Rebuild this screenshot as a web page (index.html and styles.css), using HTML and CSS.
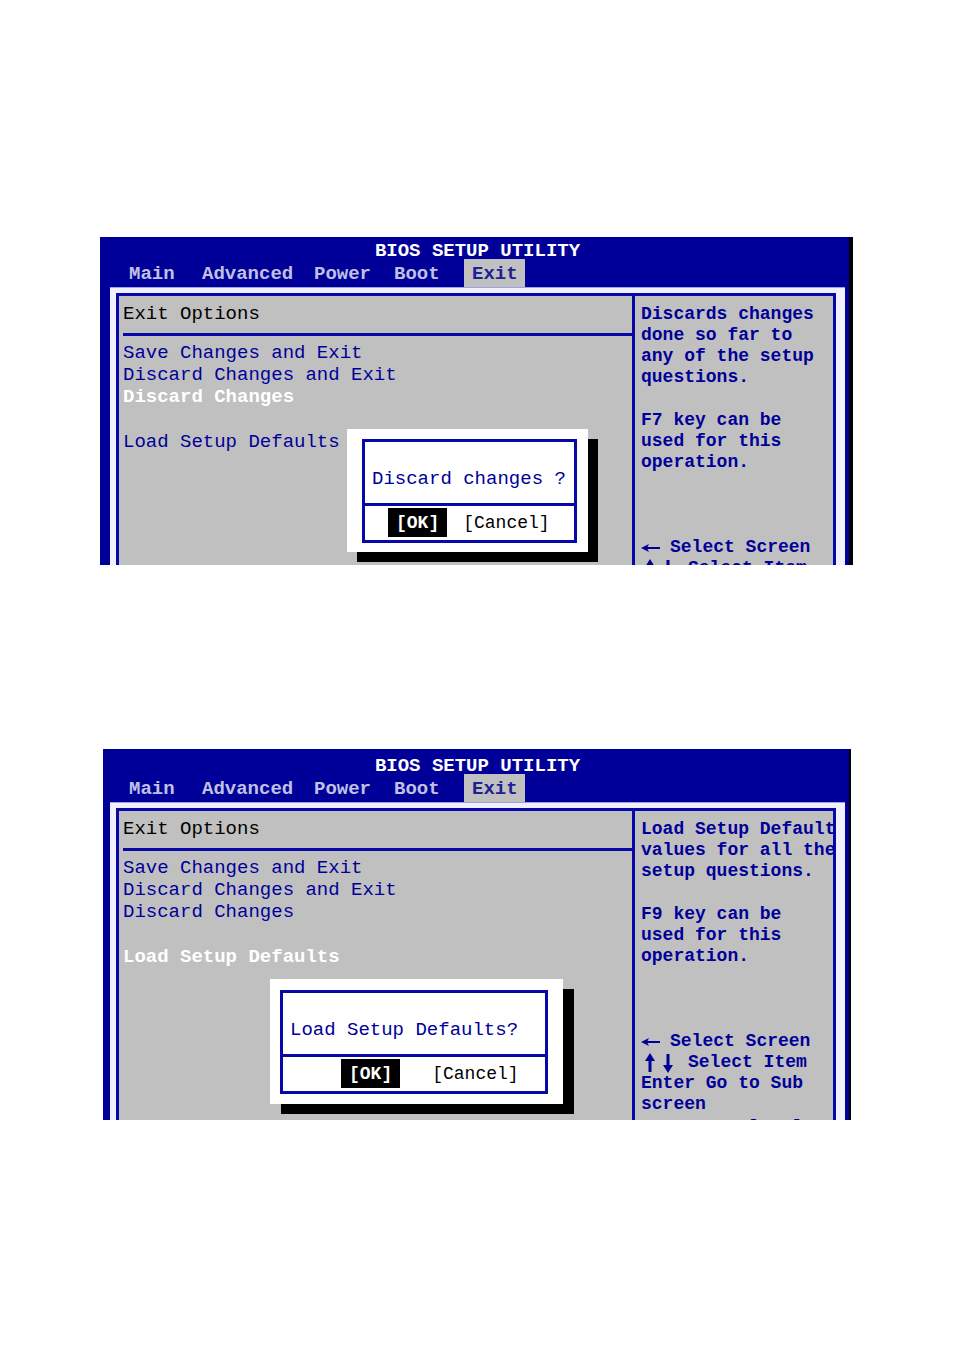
FILE: index.html
```html
<!DOCTYPE html>
<html lang="en">
<head>
  <meta charset="UTF-8">
  <meta name="viewport" content="width=device-width, initial-scale=1.0">
  <title>BIOS Setup Utility</title>
  <link rel="stylesheet" href="styles.css">
</head>
<body>
  <main>
    <section class="bios bios-discard">
      <header class="header">
        <h1>BIOS SETUP UTILITY</h1>
        <nav class="tabs">
          <a href="#">Main</a>
          <a href="#">Advanced</a>
          <a href="#">Power</a>
          <a href="#">Boot</a>
          <a href="#" class="active">Exit</a>
        </nav>
      </header>
      <div class="frame">
        <div class="panes">
          <div class="options">
            <h2>Exit Options</h2>
            <ul>
              <li><a href="#">Save Changes and Exit</a></li>
              <li><a href="#">Discard Changes and Exit</a></li>
              <li><a href="#" class="selected">Discard Changes</a></li>
              <li class="spaced"><a href="#">Load Setup Defaults</a></li>
            </ul>
          </div>
          <aside class="help">
            <p>Discards changes<br>done so far to<br>any of the setup<br>questions.</p>
            <p>F7 key can be<br>used for this<br>operation.</p>
            <div class="keys">
              <div class="key">
                <svg class="arrow-left" viewBox="0 0 19 10"><path d="M2 5H19" /><path class="head" d="M0 5L8 1L6 5L8 9Z" /></svg>
                <span>Select Screen</span>
              </div>
              <div class="key">
                <svg class="arrow-updown" viewBox="0 0 37 20"><path d="M9 5V19M27 1V15" /><path class="head" d="M9 0L14 8H4ZM27 20L22 12H32Z" /></svg>
                <span>Select Item</span>
              </div>
            </div>
          </aside>
        </div>
      </div>
      <div class="dialog dialog-discard" role="dialog" aria-labelledby="discard-title">
        <div class="dialog-box">
          <p id="discard-title">Discard changes ?</p>
          <div class="buttons">
            <button class="ok">[OK]</button>
            <button>[Cancel]</button>
          </div>
        </div>
      </div>
    </section>

    <section class="bios bios-defaults">
      <header class="header">
        <h1>BIOS SETUP UTILITY</h1>
        <nav class="tabs">
          <a href="#">Main</a>
          <a href="#">Advanced</a>
          <a href="#">Power</a>
          <a href="#">Boot</a>
          <a href="#" class="active">Exit</a>
        </nav>
      </header>
      <div class="frame">
        <div class="panes">
          <div class="options">
            <h2>Exit Options</h2>
            <ul>
              <li><a href="#">Save Changes and Exit</a></li>
              <li><a href="#">Discard Changes and Exit</a></li>
              <li><a href="#">Discard Changes</a></li>
              <li class="spaced"><a href="#" class="selected">Load Setup Defaults</a></li>
            </ul>
          </div>
          <aside class="help">
            <p>Load Setup Default<br>values for all the<br>setup questions.</p>
            <p>F9 key can be<br>used for this<br>operation.</p>
            <div class="keys">
              <div class="key">
                <svg class="arrow-left" viewBox="0 0 19 10"><path d="M2 5H19" /><path class="head" d="M0 5L8 1L6 5L8 9Z" /></svg>
                <span>Select Screen</span>
              </div>
              <div class="key">
                <svg class="arrow-updown" viewBox="0 0 37 20"><path d="M9 5V19M27 1V15" /><path class="head" d="M9 0L14 8H4ZM27 20L22 12H32Z" /></svg>
                <span>Select Item</span>
              </div>
              <div>Enter Go to Sub<br>screen</div>
              <div class="general">F1&nbsp; General Help</div>
            </div>
          </aside>
        </div>
      </div>
      <div class="dialog dialog-defaults" role="dialog" aria-labelledby="defaults-title">
        <div class="dialog-box">
          <p id="defaults-title">Load Setup Defaults?</p>
          <div class="buttons">
            <button class="ok">[OK]</button>
            <button>[Cancel]</button>
          </div>
        </div>
      </div>
    </section>
  </main>
</body>
</html>
```
FILE: styles.css
```css
* {
  box-sizing: border-box;
}
body {
  margin: 0;
  background-color: #fff;
  color: #000099;
  font-family: "Liberation Mono", "Courier New", monospace;
  font-size: 19px;
}
main {
  padding: 237px 101px 0 100px;
}
h1, h2, p, ul {
  margin: 0;
  padding: 0;
  font-size: 19px;
}
a {
  color: inherit;
  text-decoration: none;
}
.bios {
  position: relative;
  display: flex;
  flex-direction: column;
  overflow: hidden;
  padding: 0 4px 0 10px;
  background-color: #000099;
  border-right: 4px solid #000;
}
.bios-discard {
  height: 328px;
}
.bios-defaults {
  height: 371px;
  margin: 184px 2px 0 3px;
  padding-left: 7px;
  border-right-width: 2px;
}
.header {
  padding-top: 6px;
}
.bios-defaults .header {
  padding-top: 9px;
}
h1 {
  color: #fff;
  line-height: 16px;
  text-align: center;
}
.tabs {
  display: grid;
  grid-template-columns: 73px 112px 80px 78px auto;
  justify-content: start;
  padding-left: 11px;
  color: #c0c0e4;
  font-weight: bold;
  line-height: 26px;
}
.tabs a {
  padding: 2px 7px 0 8px;
}
.tabs .active {
  background-color: #c0c0c0;
  color: #202090;
}
.frame {
  display: flex;
  flex: 1;
  padding: 5px 9px 0 6px;
  background-color: #f0f0ff;
  border-top: 1px solid #a0a0e8;
}
.panes {
  display: grid;
  grid-template-columns: 1fr 201px;
  flex: 1;
  background-color: #c0c0c0;
  border: 3px solid #0808a8;
  border-bottom: none;
}
.options h2 {
  margin-left: 4px;
  color: #000;
  font-weight: normal;
  line-height: 37px;
  border-bottom: 3px solid #0808a8;
}
.options ul {
  padding: 6px 0 0 4px;
  list-style: none;
  line-height: 22px;
}
.options .spaced {
  margin-top: 23px;
}
.options .selected {
  color: #fff;
  font-weight: bold;
}
.help {
  padding: 8px 0 0 6px;
  border-left: 3px solid #0808a8;
  font-size: 18px;
  font-weight: bold;
  line-height: 21px;
  white-space: nowrap;
}
.help p {
  margin-bottom: 22px;
  font-size: 18px;
}
.keys {
  margin-top: 64px;
}
.key {
  display: flex;
  align-items: center;
}
.key svg {
  fill: none;
  stroke: #000099;
  stroke-width: 2;
}
.key .head {
  fill: #000099;
  stroke: none;
}
.arrow-left {
  width: 19px;
  height: 10px;
  margin-right: 10px;
}
.arrow-updown {
  width: 37px;
  height: 20px;
  margin-right: 10px;
}
.key .arrow-updown {
  stroke-width: 3;
}
.general {
  margin-top: 2px;
}
.dialog {
  position: absolute;
  background-color: #fff;
}
.dialog-discard {
  top: 192px;
  left: 247px;
  width: 241px;
  padding: 10px 11px 9px 15px;
  box-shadow: 10px 10px 0 #000;
}
.dialog-defaults {
  top: 230px;
  left: 167px;
  width: 293px;
  padding: 11px 15px 10px 10px;
  box-shadow: 11px 10px 0 #000;
}
.dialog-box {
  border: 3px solid #0808a8;
}
.dialog p {
  padding: 26px 0 13px 7px;
  line-height: 22px;
  white-space: nowrap;
}
.buttons {
  display: flex;
  gap: 8px;
  height: 37px;
  padding: 2px 0 3px 23px;
  border-top: 3px solid #0808a8;
}
.dialog-defaults .buttons {
  gap: 24px;
  padding-left: 58px;
}
.buttons button {
  padding: 0 8px;
  background: none;
  border: none;
  color: #000;
  font: inherit;
  font-size: 18px;
}
.buttons .ok {
  background-color: #000;
  color: #fff;
  font-weight: bold;
}
```
